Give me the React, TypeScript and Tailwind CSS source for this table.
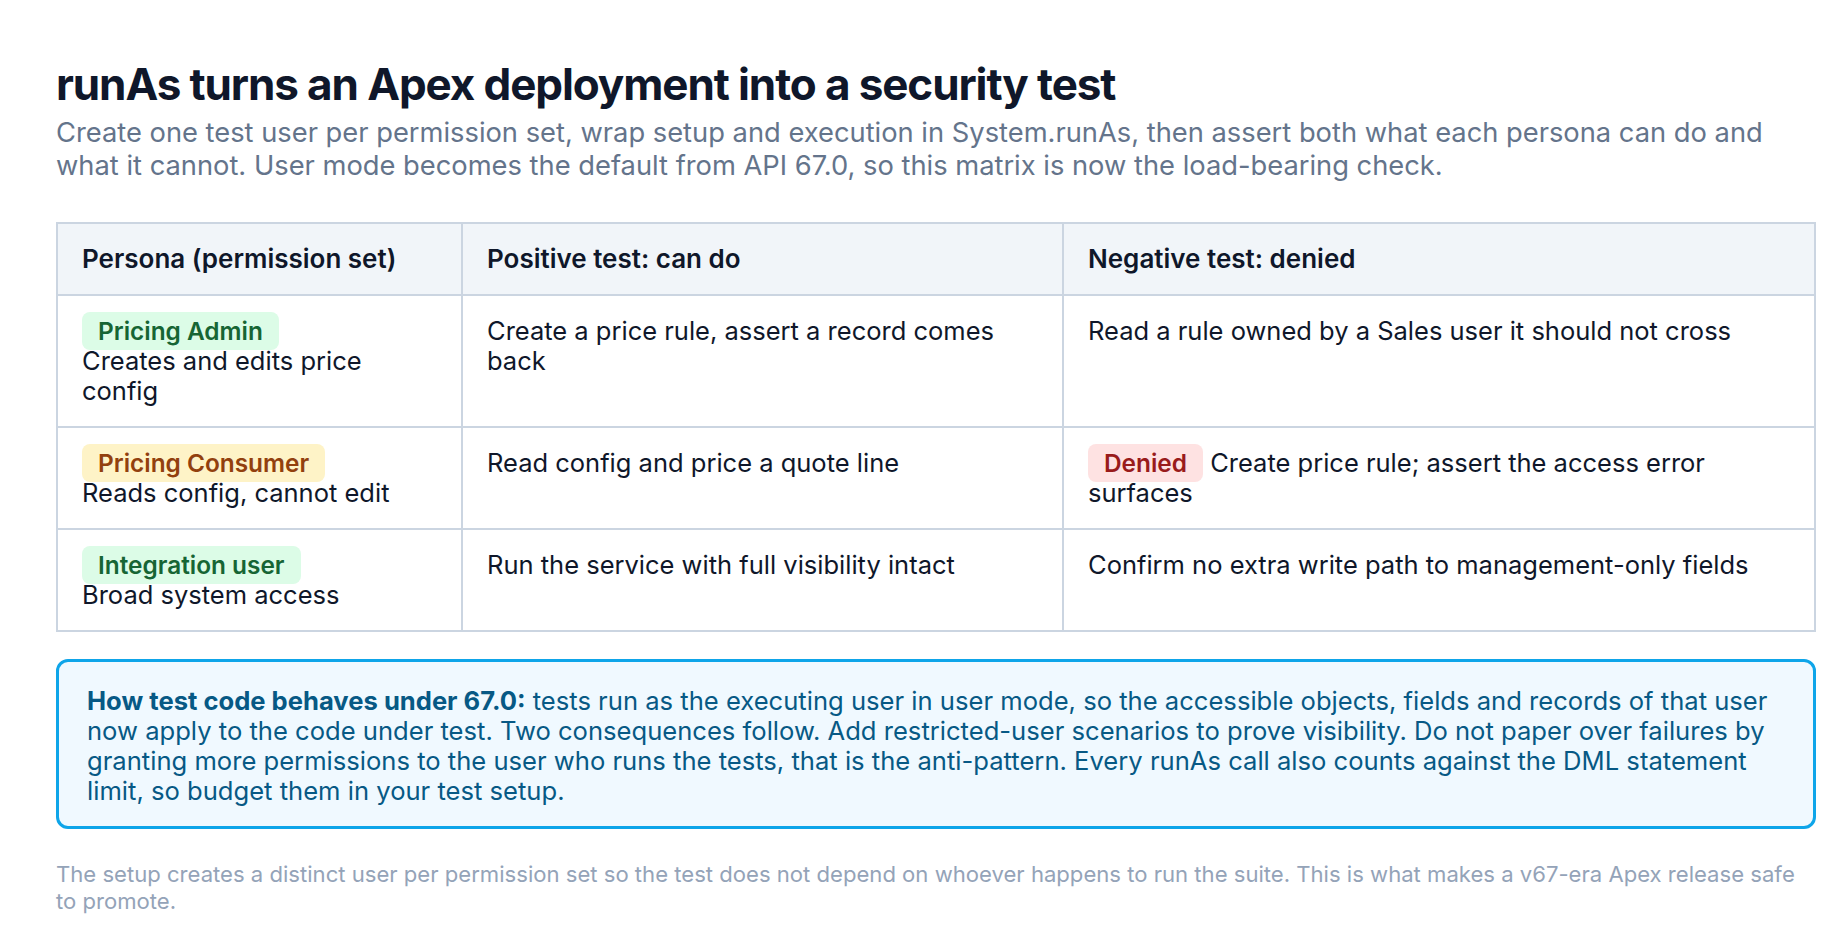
const rows = [
  {
    badge: "Pricing Admin",
    tone: "green",
    desc: "Creates and edits price config",
    pos: "Create a price rule, assert a record comes back",
    neg: "Read a rule owned by a Sales user it should not cross",
    denied: false,
  },
  {
    badge: "Pricing Consumer",
    tone: "amber",
    desc: "Reads config, cannot edit",
    pos: "Read config and price a quote line",
    neg: "Create price rule; assert the access error surfaces",
    denied: true,
  },
  {
    badge: "Integration user",
    tone: "green",
    desc: "Broad system access",
    pos: "Run the service with full visibility intact",
    neg: "Confirm no extra write path to management-only fields",
    denied: false,
  },
];

const tones: Record<string, string> = {
  green: "bg-[#dcfce7] text-[#166534]",
  amber: "bg-[#fef3c7] text-[#92400e]",
  red: "bg-[#fee2e2] text-[#991b1b]",
};

function Badge({ tone, children }: { tone: string; children: string }) {
  return (
    <span className={`${tones[tone]} rounded-lg px-4 py-1 text-[24.4px] leading-[24px] font-semibold`}>{children}</span>
  );
}

export default function App() {
  return (
    <div className="min-h-screen bg-white pl-14 pr-6 pt-[58px] font-['Inter',_sans-serif] text-[#0f172a]">
      <h1 className="text-[44px] font-bold leading-[52px] tracking-tight text-[#0f172a]">
        runAs turns an Apex deployment into a security test
      </h1>
      <p className="mt-1.5 text-[27.3px] leading-[33px] text-[#64748b]">
        Create one test user per permission set, wrap setup and execution in System.runAs, then assert both what each persona can do and what it cannot. User mode becomes the default from API 67.0, so this matrix is now the load-bearing check.
      </p>

      <table className="mt-10 w-full table-fixed border-collapse border-2 border-[#cbd5e1] text-[25.5px] leading-[30px]">
        <colgroup>
          <col className="w-[405px]" />
          <col className="w-[601px]" />
          <col />
        </colgroup>
        <thead>
          <tr className="bg-[#f1f5f9] text-[26px]">
            <th className="border-2 border-[#cbd5e1] px-6 py-5 text-left font-semibold">Persona (permission set)</th>
            <th className="border-2 border-[#cbd5e1] px-6 py-5 text-left font-semibold">Positive test: can do</th>
            <th className="border-2 border-[#cbd5e1] px-6 py-5 text-left font-semibold">Negative test: denied</th>
          </tr>
        </thead>
        <tbody>
          {rows.map((r) => (
            <tr key={r.badge}>
              <td className="border-2 border-[#cbd5e1] px-6 py-5 align-top">
                <Badge tone={r.tone}>{r.badge}</Badge>
                <div>{r.desc}</div>
              </td>
              <td className="border-2 border-[#cbd5e1] px-6 py-5 align-top">{r.pos}</td>
              <td className="border-2 border-[#cbd5e1] px-6 py-5 align-top">
                {r.denied && (
                  <>
                    <Badge tone="red">Denied</Badge>{" "}
                  </>
                )}
                {r.neg}
              </td>
            </tr>
          ))}
        </tbody>
      </table>

      <div className="mt-[27px] rounded-xl border-[3px] border-[#0ea5e9] bg-[#f0f9ff] px-7 pt-6 pb-5 text-[25.6px] leading-[30px] text-[#075985]">
        <strong className="font-bold">How test code behaves under 67.0:</strong> tests run as the executing user in user mode, so the accessible objects, fields and records of that user now apply to the code under test. Two consequences follow. Add restricted-user scenarios to prove visibility. Do not paper over failures by granting more permissions to the user who runs the tests, that is the anti-pattern. Every runAs call also counts against the DML statement limit, so budget them in your test setup.
      </div>

      <p className="mt-8 text-[22.1px] leading-[27px] text-[#94a3b8]">
        The setup creates a distinct user per permission set so the test does not depend on whoever happens to run the suite. This is what makes a v67-era Apex release safe to promote.
      </p>
    </div>
  );
}
